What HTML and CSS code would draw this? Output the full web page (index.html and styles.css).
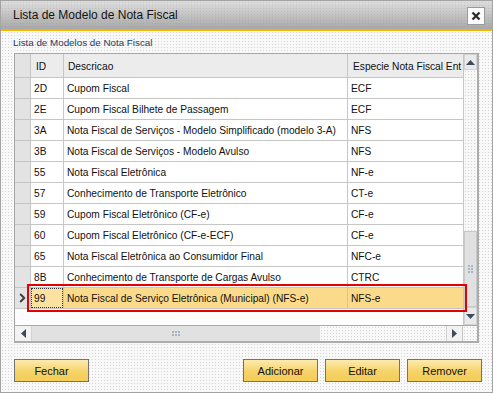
FILE: index.html
```html
<!DOCTYPE html>
<html>
<head>
<meta charset="utf-8">
<link rel="stylesheet" href="styles.css">
</head>
<body>
<div class="window dots">
  <div class="titlebar">
    <span class="title">Lista de Modelo de Nota Fiscal</span>
    <span class="close"><svg width="10" height="10" viewBox="0 0 10 10"><path d="M1.5 1.5 L8.5 8.5 M8.5 1.5 L1.5 8.5" stroke="#2b2b2b" stroke-width="2.3"/></svg></span>
  </div>
  <div class="content">
    <div class="label">Lista de Modelos de Nota Fiscal</div>
    <div class="frame">
      <div class="main">
        <div class="table">
          <div class="row head">
            <div class="cell rh"></div>
            <div class="cell">ID</div>
            <div class="cell">Descricao</div>
            <div class="cell last">Especie Nota Fiscal Ent</div>
          </div>
          <div class="row"><div class="cell rh"></div><div class="cell">2D</div><div class="cell">Cupom Fiscal</div><div class="cell last">ECF</div></div>
          <div class="row"><div class="cell rh"></div><div class="cell">2E</div><div class="cell">Cupom Fiscal Bilhete de Passagem</div><div class="cell last">ECF</div></div>
          <div class="row"><div class="cell rh"></div><div class="cell">3A</div><div class="cell">Nota Fiscal de Serviços - Modelo Simplificado (modelo 3-A)</div><div class="cell last">NFS</div></div>
          <div class="row"><div class="cell rh"></div><div class="cell">3B</div><div class="cell">Nota Fiscal de Serviços - Modelo Avulso</div><div class="cell last">NFS</div></div>
          <div class="row"><div class="cell rh"></div><div class="cell">55</div><div class="cell">Nota Fiscal Eletrônica</div><div class="cell last">NF-e</div></div>
          <div class="row"><div class="cell rh"></div><div class="cell">57</div><div class="cell">Conhecimento de Transporte Eletrônico</div><div class="cell last">CT-e</div></div>
          <div class="row"><div class="cell rh"></div><div class="cell">59</div><div class="cell">Cupom Fiscal Eletrônico (CF-e)</div><div class="cell last">CF-e</div></div>
          <div class="row"><div class="cell rh"></div><div class="cell">60</div><div class="cell">Cupom Fiscal Eletrônico (CF-e-ECF)</div><div class="cell last">CF-e</div></div>
          <div class="row"><div class="cell rh"></div><div class="cell">65</div><div class="cell">Nota Fiscal Eletrônica ao Consumidor Final</div><div class="cell last">NFC-e</div></div>
          <div class="row"><div class="cell rh"></div><div class="cell">8B</div><div class="cell">Conhecimento de Transporte de Cargas Avulso</div><div class="cell last">CTRC</div></div>
          <div class="row selected">
            <div class="cell rh"><svg width="7" height="10" viewBox="0 0 7 10"><path d="M1.2 1 L5.2 5 L1.2 9" stroke="#3f3f3f" stroke-width="2" fill="none"/></svg></div>
            <div class="cell focus"><span>99</span></div>
            <div class="cell">Nota Fiscal de Serviço Eletrônica (Municipal) (NFS-e)</div>
            <div class="cell last">NFS-e</div>
          </div>
        </div>
        <div class="vscroll">
          <div class="sbtn up"><svg width="9" height="5" viewBox="0 0 9 5"><path d="M0 5 L4.5 0 L9 5Z" fill="#3c4a5b"/></svg></div>
          <div class="track dots"></div>
          <div class="vthumb"><svg width="5" height="8" viewBox="0 0 5 8"><g fill="#aab5c3"><rect x="0" y="0" width="2" height="2"/><rect x="3" y="0" width="2" height="2"/><rect x="0" y="3" width="2" height="2"/><rect x="3" y="3" width="2" height="2"/><rect x="0" y="6" width="2" height="2"/><rect x="3" y="6" width="2" height="2"/></g></svg></div>
          <div class="sbtn down"><svg width="9" height="5" viewBox="0 0 9 5"><path d="M0 0 L9 0 L4.5 5Z" fill="#3c4a5b"/></svg></div>
        </div>
      </div>
      <div class="hrow">
        <div class="hbtn"><svg width="5" height="9" viewBox="0 0 5 9"><path d="M5 0 L5 9 L0 4.5Z" fill="#3c4a5b"/></svg></div>
        <div class="hthumb"><svg width="8" height="5" viewBox="0 0 8 5"><g fill="#aab5c3"><rect x="0" y="0" width="2" height="2"/><rect x="3" y="0" width="2" height="2"/><rect x="6" y="0" width="2" height="2"/><rect x="0" y="3" width="2" height="2"/><rect x="3" y="3" width="2" height="2"/><rect x="6" y="3" width="2" height="2"/></g></svg></div>
        <div class="htrack dots"></div>
        <div class="hbtn right"><svg width="5" height="9" viewBox="0 0 5 9"><path d="M0 0 L5 4.5 L0 9Z" fill="#3c4a5b"/></svg></div>
        <div class="corner dots"></div>
      </div>
      <div class="highlight"></div>
    </div>
    <div class="buttons">
      <div class="btn">Fechar</div>
      <div class="spacer"></div>
      <div class="btn">Adicionar</div>
      <div class="btn">Editar</div>
      <div class="btn">Remover</div>
    </div>
  </div>
</div>
</body>
</html>
```
FILE: styles.css
```css
html, body {
  margin: 0;
  padding: 0;
}
body {
  width: 493px;
  height: 393px;
  overflow: hidden;
  font-family: "Liberation Sans", Arial, sans-serif;
  background: #ffffff;
}
.dots {
  background-color: #f8f8f8;
  background-image: radial-gradient(circle, #d6d6d6 0.7px, transparent 1px);
  background-size: 3px 3px;
}
.window {
  box-sizing: border-box;
  width: 493px;
  height: 393px;
  border: 1px solid #a3a3a3;
  display: flex;
  flex-direction: column;
}
.titlebar {
  box-sizing: border-box;
  height: 30px;
  flex: none;
  display: flex;
  align-items: center;
  justify-content: space-between;
  padding: 0 7px 0 12px;
  background-color: #c4c4c4;
  background-image: radial-gradient(circle, rgba(120,120,120,0.18) 0.7px, transparent 1px), linear-gradient(#dedede, #a8a8a8);
  background-size: 3px 3px, 100% 100%;
  border-bottom: 2px solid #f2b600;
}
.title {
  font-size: 12px;
  color: #151515;
}
.close {
  box-sizing: border-box;
  width: 18px;
  height: 18px;
  margin-top: 2px;
  border: 1px solid #9a9a9a;
  background: #fbfbfb;
  display: flex;
  align-items: center;
  justify-content: center;
}
.content {
  flex: 1;
  display: flex;
  flex-direction: column;
  padding: 5px 10px 0 13px;
}
.label {
  font-size: 9.8px;
  line-height: 14px;
  color: #1d3a66;
  margin-left: -1px;
  margin-bottom: 3px;
}
.frame {
  position: relative;
  box-sizing: border-box;
  width: 465px;
  height: 290px;
  border-top: 1px solid #a6a6a6;
  border-left: 1px solid #a6a6a6;
  border-right: 2px solid #acacac;
  border-bottom: 2px solid #acacac;
  display: flex;
  flex-direction: column;
  background: #ffffff;
}
.main {
  height: 271px;
  display: flex;
}
.table {
  width: 448px;
  background: #fdfdfd;
}
.row {
  display: grid;
  grid-template-columns: 16px 33px 284px 115px;
  height: 21px;
  font-size: 10.2px;
  color: #111111;
}
.row.head {
  height: 24px;
  background: #ececec;
}
.cell {
  box-sizing: border-box;
  border-right: 1px solid #c6c6c6;
  border-bottom: 1px solid #c6c6c6;
  padding-left: 3px;
  white-space: nowrap;
  overflow: hidden;
  display: flex;
  align-items: center;
  background: #ffffff;
}
.head .cell {
  background: #ececec;
  padding-left: 4px;
  padding-top: 1px;
}
.head .cell:nth-child(2) {
  padding-left: 5px;
}
.head .cell.last {
  padding-left: 5px;
  border-right: none;
}
.cell.last {
  border-right: none;
}
.cell.rh {
  background: #e3e3e3;
  padding-left: 0;
  justify-content: center;
}
.head .cell.rh {
  background: #e3e3e3;
}
.selected .cell {
  background: #fbdb8b;
}
.selected .cell.rh {
  background: #e3e3e3;
}
.cell.focus {
  padding: 0;
}
.cell.focus span {
  box-sizing: border-box;
  flex: 1;
  align-self: stretch;
  display: flex;
  align-items: center;
  padding-left: 2px;
  border: 1px dotted #333333;
  background: #fce2a0;
}
.vscroll {
  flex: 1;
  box-sizing: border-box;
  border-left: 1px solid #c6c6c6;
  display: flex;
  flex-direction: column;
}
.sbtn {
  box-sizing: border-box;
  display: flex;
  align-items: center;
  justify-content: center;
  background: #e9eaec;
  border: 1px solid #d2d2d2;
}
.sbtn.up {
  height: 16px;
}
.sbtn.down {
  height: 18px;
}
.track {
  flex: 1;
}
.vthumb {
  box-sizing: border-box;
  height: 76px;
  background: #e1e1e1;
  border: 1px solid #c9c9c9;
  display: flex;
  align-items: center;
  justify-content: center;
}
.hrow {
  height: 15px;
  border-top: 1px solid #a9a9a9;
  display: flex;
}
.hbtn {
  box-sizing: border-box;
  width: 17px;
  display: flex;
  align-items: center;
  justify-content: center;
  background: #f2f2f2;
  border-right: 1px solid #d2d2d2;
}
.hbtn.right {
  width: 16px;
  border-right: none;
  border-left: 1px solid #d2d2d2;
}
.hthumb {
  width: 288px;
  background: #e1e1e1;
  display: flex;
  align-items: center;
  justify-content: center;
}
.htrack {
  flex: 1;
}
.corner {
  width: 14px;
  border-left: 1px solid #c6c6c6;
}
.highlight {
  position: absolute;
  box-sizing: border-box;
  left: 12px;
  top: 230px;
  width: 440px;
  height: 28px;
  border: 2px solid #e60000;
}
.buttons {
  margin-top: 16px;
  display: flex;
  gap: 7px;
}
.spacer {
  flex: 1;
}
.btn {
  box-sizing: border-box;
  width: 75px;
  height: 23px;
  border: 1px solid #727272;
  background: linear-gradient(#fdebae, #f6d369 55%, #f4cd57);
  font-size: 11px;
  color: #111111;
  display: flex;
  align-items: center;
  justify-content: center;
}
```
